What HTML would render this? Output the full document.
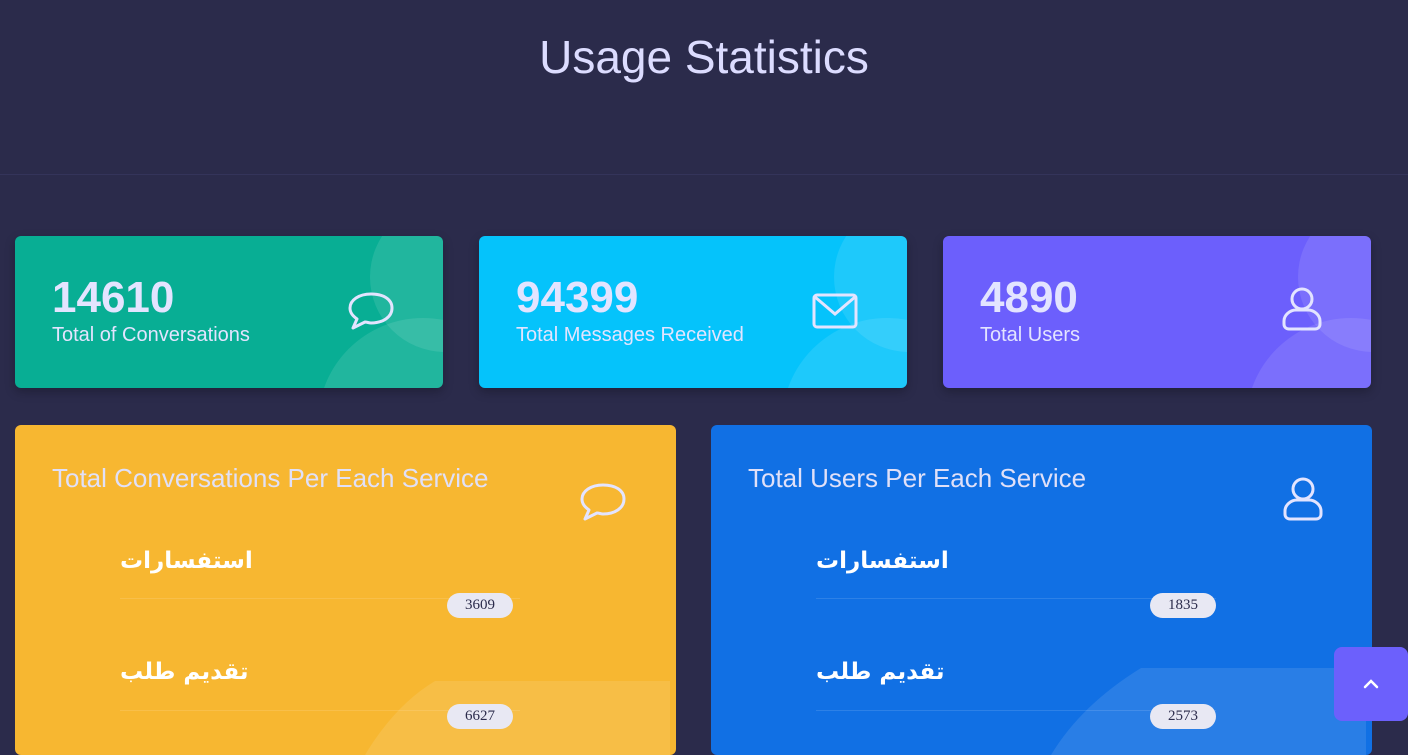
<!DOCTYPE html>
<html><head><meta charset="utf-8"><style>
*{margin:0;padding:0;box-sizing:border-box}
body{width:1408px;height:739px;overflow:hidden;background:#2b2b4b;font-family:"Liberation Sans",sans-serif;color:#dfe0ff;position:relative}
h1{position:absolute;top:30px;left:0;width:1408px;text-align:center;font-weight:normal;font-size:46px;color:#dcdcff;font-family:"Liberation Sans",sans-serif}
.hr{position:absolute;top:174px;left:0;width:1408px;height:1px;background:#34345a}
.c{position:absolute;top:236px;width:428px;height:152px;border-radius:6px;overflow:hidden;box-shadow:0 4px 10px rgba(0,0,0,.25)}
.c .b1{position:absolute;left:355px;top:-34px;width:150px;height:150px;border-radius:50%;background:rgba(255,255,255,.1)}
.c .b2{position:absolute;left:303px;top:82px;width:210px;height:210px;border-radius:50%;background:rgba(255,255,255,.1)}
.num{position:absolute;left:37px;top:37px;font-size:44px;font-weight:bold;font-family:"Liberation Sans",sans-serif;color:#e3e4ff}
.lab{position:absolute;left:37px;top:88px;font-size:20px;color:#e3e4ff;font-family:"Liberation Sans",sans-serif}
.ic{position:absolute}
.big{position:absolute;top:425px;width:661px;height:330px;border-radius:6px;overflow:hidden}
.bt{position:absolute;left:37px;top:38px;font-size:26px;color:#e0e0f8;font-family:"Liberation Sans",sans-serif}
.ar{position:absolute;left:105px;font-size:23px;font-weight:bold;color:#fff;font-family:"DejaVu Sans","Noto Sans CJK SC",sans-serif}
.ln{position:absolute;left:105px;width:400px;height:1px;background:rgba(255,255,255,.12)}
.bd{position:absolute;left:432px;width:66px;height:25px;border-radius:13px;background:#e8e8f3;color:#2b2b4b;font-size:15px;text-align:center;line-height:25px;font-family:"Liberation Serif",serif}
.top{position:absolute;left:1334px;top:647px;width:74px;height:74px;border-radius:8px;background:#6c60fc}
</style></head><body>
<h1>Usage Statistics</h1>
<div class="hr"></div>

<div class="c" style="left:15px;background:#08ae94"><div class="b1"></div><div class="b2"></div>
<div class="num">14610</div><div class="lab">Total of Conversations</div>
<svg class="ic" style="left:332px;top:54px" width="48" height="42" viewBox="0 0 48 42"><path d="M24 4C12 4 3 10 3 18c0 5 3 8 7 11l-4 9 12-6c2 0 4 1 6 1 12 0 21-6 21-15S36 4 24 4z" fill="none" stroke="#e3e4ff" stroke-width="3" stroke-linejoin="round"/></svg>
</div>
<div class="c" style="left:479px;background:#05c3fb"><div class="b1"></div><div class="b2"></div>
<div class="num">94399</div><div class="lab">Total Messages Received</div>
<svg class="ic" style="left:332px;top:56px" width="48" height="38" viewBox="0 0 48 38"><rect x="3" y="3" width="42" height="32" rx="3" fill="none" stroke="#e3e4ff" stroke-width="3"/><path d="M4 5l20 17 20-17" fill="none" stroke="#e3e4ff" stroke-width="3"/></svg>
</div>
<div class="c" style="left:943px;background:#6c5ffc"><div class="b1"></div><div class="b2"></div>
<div class="num">4890</div><div class="lab">Total Users</div>
<svg class="ic" style="left:338px;top:49px" width="42" height="48" viewBox="0 0 42 48"><circle cx="21" cy="14" r="10" fill="none" stroke="#e3e4ff" stroke-width="3"/><path d="M8 44h26c3 0 5-2 5-5v-3c0-6-6-11-12-11H15C9 25 3 30 3 36v3c0 3 2 5 5 5z" fill="none" stroke="#e3e4ff" stroke-width="3"/></svg>
</div>

<div class="big" style="left:15px;background:#f7b731">
<svg style="position:absolute;left:0;top:0" width="661" height="330"><path d="M420 256H655V330H350Q380 280 420 256z" fill="rgba(255,255,255,.1)"/></svg>
<div class="bt">Total Conversations Per Each Service</div>
<svg class="ic" style="left:564px;top:56px" width="48" height="42" viewBox="0 0 48 42"><path d="M24 4C12 4 3 10 3 18c0 5 3 8 7 11l-4 9 12-6c2 0 4 1 6 1 12 0 21-6 21-15S36 4 24 4z" fill="none" stroke="#e3e4ff" stroke-width="3" stroke-linejoin="round"/></svg>
<div class="ar" style="top:123px">استفسارات</div><div class="ln" style="top:173px"></div><div class="bd" style="top:168px">3609</div>
<div class="ar" style="top:234px">تقديم طلب</div><div class="ln" style="top:285px"></div><div class="bd" style="top:279px">6627</div>
</div>
<div class="big" style="left:711px;background:#1170e4">
<svg style="position:absolute;left:0;top:0" width="661" height="330"><path d="M430 243H655V330H340Q370 280 430 243z" fill="rgba(255,255,255,.1)"/></svg>
<div class="bt">Total Users Per Each Service</div>
<svg class="ic" style="left:571px;top:50px" width="42" height="48" viewBox="0 0 42 48"><circle cx="21" cy="14" r="10" fill="none" stroke="#e3e4ff" stroke-width="3"/><path d="M8 44h26c3 0 5-2 5-5v-3c0-6-6-11-12-11H15C9 25 3 30 3 36v3c0 3 2 5 5 5z" fill="none" stroke="#e3e4ff" stroke-width="3"/></svg>
<div class="ar" style="top:123px">استفسارات</div><div class="ln" style="top:173px"></div><div class="bd" style="top:168px;left:439px">1835</div>
<div class="ar" style="top:234px">تقديم طلب</div><div class="ln" style="top:285px"></div><div class="bd" style="top:279px;left:439px">2573</div>
</div>
<div class="top"><svg style="position:absolute;left:29px;top:31px" width="16" height="12" viewBox="0 0 16 12"><path d="M2 9l6-6 6 6" fill="none" stroke="#fff" stroke-width="2.5" stroke-linecap="round"/></svg></div>
</body></html>
